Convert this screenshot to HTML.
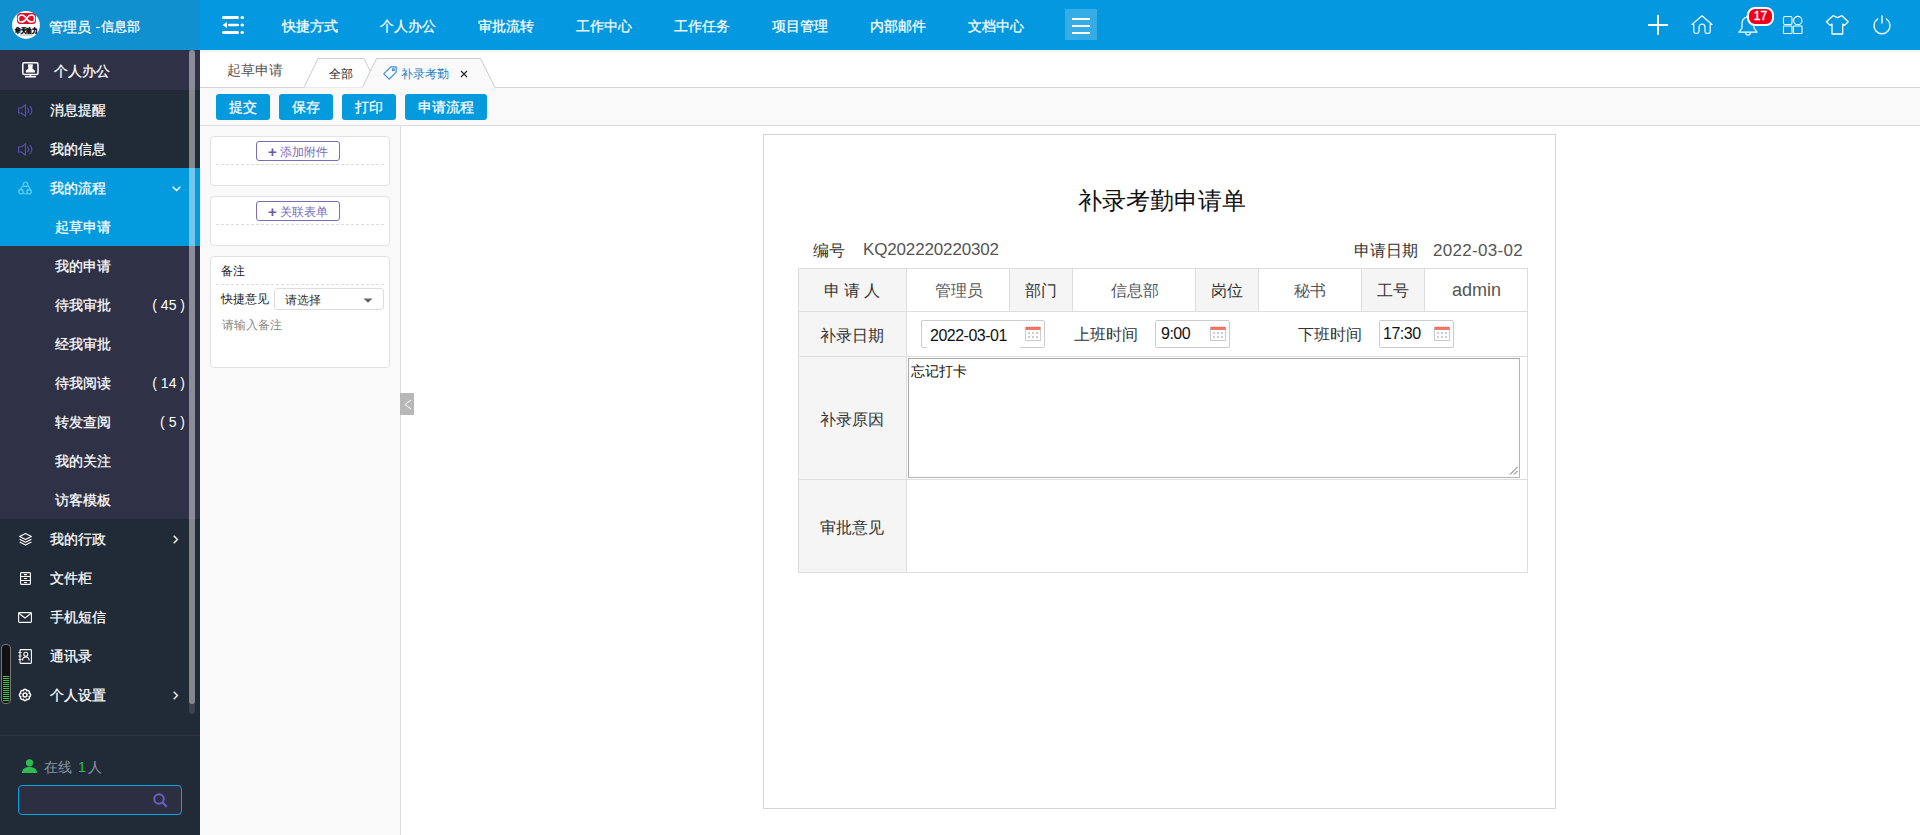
<!DOCTYPE html>
<html><head><meta charset="utf-8">
<style>
*{margin:0;padding:0;box-sizing:border-box}
html,body{width:1920px;height:835px;overflow:hidden;background:#fff;font-family:"Liberation Sans",sans-serif;font-size:14px;color:#333}
.a{position:absolute}
svg{position:absolute;overflow:visible}
#hdr{position:absolute;left:0;top:0;width:1920px;height:50px;background:#0398df;box-shadow:0 1px 3px rgba(0,0,0,.08)}
#logo{position:absolute;left:0;top:0;width:200px;height:50px;background:#1190cf}
.nav{position:absolute;top:1px;height:50px;line-height:50px;color:#fff;font-size:14px;white-space:nowrap}
#side{position:absolute;left:0;top:50px;width:200px;height:785px;background:#212a37}
.it{position:absolute;left:0;width:200px;height:39px;color:#fff;font-size:14px;line-height:39px;white-space:nowrap}
.it .t{position:absolute;left:50px;top:1px}
.sub{background:#2f3146}
.sub .t{left:55px}
.cnt{position:absolute;right:15px;top:1px}
#tabs{position:absolute;left:200px;top:50px;width:1720px;height:38px;background:#fff}
#tool{position:absolute;left:200px;top:88px;width:1720px;height:38px;background:#f9f9f9;border-bottom:1px solid #ddd}
.btn{position:absolute;top:6px;height:26px;background:#049ade;color:#fff;border-radius:3px;text-align:center;line-height:26px;font-size:14px}
#lp{position:absolute;left:200px;top:126px;width:201px;height:709px;background:#f9f9f9;border-right:1px solid #ddd}
.box{position:absolute;left:10px;width:180px;background:#fff;border:1px solid #e3e3e3;border-radius:4px}
.pbtn{position:absolute;left:45px;top:4px;width:84px;height:20px;border:1px solid #7a6cb8;border-radius:3px;color:#7a6cb8;font-size:12px;line-height:18px;text-align:center}
.dash{position:absolute;left:5px;right:5px;border-top:1px dashed #ddd}
#form{position:absolute;left:763px;top:134px;width:793px;height:675px;border:1px solid #d5d5d5;background:#fff}
.c{position:absolute;text-align:center;font-size:16px;color:#555;white-space:nowrap}
.lb{background:#f5f5f5;color:#333}
.hl{position:absolute;height:1px;background:#ddd}
.vl{position:absolute;width:1px;background:#ddd}
.inp{position:absolute;top:320px;height:28px;border:1px solid #ccc;border-radius:2px;background:#fff;font-size:16px;letter-spacing:-0.5px;color:#111;line-height:25px;white-space:nowrap}
.nav,.it,.btn{-webkit-text-stroke:0.25px #fff}
.it .cnt{-webkit-text-stroke:0}
</style></head><body>
<!-- HEADER -->
<div id="hdr"></div>
<div id="logo"></div>
<svg style="left:12px;top:11px" width="28" height="28" viewBox="0 0 28 28">
  <circle cx="14" cy="14" r="13.9" fill="#fff"/>
  <rect x="5" y="2" width="19" height="11" rx="3.5" fill="#e0102a"/>
  <path d="M14.5 7.5c-1.6-2.6-3.2-3.6-5-3.6-1.9 0-3.1 1.6-3.1 3.6s1.2 3.6 3.1 3.6c1.8 0 3.4-1 5-3.6s3.2-3.6 5-3.6c1.9 0 3.1 1.6 3.1 3.6s-1.2 3.6-3.1 3.6c-1.8 0-3.4-1-5-3.6z" fill="none" stroke="#fff" stroke-width="1.5"/>
  <text x="14" y="22" font-size="6.8" font-weight="bold" fill="#111" stroke="#111" stroke-width="0.45" textLength="22" lengthAdjust="spacingAndGlyphs" text-anchor="middle" font-family="Liberation Sans">华天动力</text>
  <rect x="7.5" y="23" width="13" height="2" fill="#aaa" opacity=".5"/>
</svg>
<div class="nav" style="left:49px;top:2px">管理员</div><div class="a" style="left:96px;top:27px;width:4px;height:1px;background:#fff"></div><div class="nav" style="left:101px;top:2px;font-size:12.5px;line-height:50px">信息部</div>
<svg style="left:222px;top:16px" width="22" height="18" viewBox="0 0 22 18">
  <rect x="0" y="0" width="17" height="3" rx="1.5" fill="#fff"/>
  <rect x="18.5" y="0" width="3.5" height="3" rx="1.5" fill="#fff"/>
  <path d="M0.5 9 L5 6 L5 12 Z" fill="#fff"/>
  <rect x="6" y="7.7" width="11" height="2.6" rx="1.3" fill="#fff"/>
  <rect x="18.5" y="7.5" width="3.5" height="3" rx="1.5" fill="#fff"/>
  <rect x="0" y="15" width="17" height="3" rx="1.5" fill="#fff"/>
  <rect x="18.5" y="15" width="3.5" height="3" rx="1.5" fill="#fff"/>
</svg>
<div class="nav" style="left:282px">快捷方式</div>
<div class="nav" style="left:380px">个人办公</div>
<div class="nav" style="left:478px">审批流转</div>
<div class="nav" style="left:576px">工作中心</div>
<div class="nav" style="left:674px">工作任务</div>
<div class="nav" style="left:772px">项目管理</div>
<div class="nav" style="left:870px">内部邮件</div>
<div class="nav" style="left:968px">文档中心</div>
<div class="a" style="left:1065px;top:9px;width:32px;height:31px;background:rgba(255,255,255,.2)"></div>
<div class="a" style="left:1072px;top:18px;width:18px;height:2px;background:#fff"></div>
<div class="a" style="left:1072px;top:25px;width:18px;height:2px;background:#fff"></div>
<div class="a" style="left:1072px;top:32px;width:18px;height:2px;background:#fff"></div>
<!-- right icons -->
<svg style="left:1648px;top:15px" width="20" height="20" viewBox="0 0 20 20"><path d="M10 0V20M0 10H20" stroke="#fff" stroke-width="2"/></svg>
<svg style="left:1691px;top:15px" width="22" height="19" viewBox="0 0 22 19" fill="none" stroke="#fff" stroke-width="1.2" stroke-linejoin="round">
  <path d="M1 9.5L11 0.7 21 9.5h-1.8V16.5a1.8 1.8 0 0 1-1.8 1.8h-1.6a1.8 1.8 0 0 1-1.8-1.8V12.2a3 3 0 0 0-6 0V16.5a1.8 1.8 0 0 1-1.8 1.8H4.6a1.8 1.8 0 0 1-1.8-1.8V9.5z"/>
</svg>
<svg style="left:1738px;top:14px" width="20" height="22" viewBox="0 0 20 22" fill="none" stroke="#fff" stroke-width="1.2" stroke-linejoin="round">
  <path d="M10 1.5a1.2 1.2 0 0 1 1.2 1.2v.5a6.5 6.5 0 0 1 4.8 6.3v4.5l3 4.2H1l3-4.2V9.5a6.5 6.5 0 0 1 4.8-6.3v-.5A1.2 1.2 0 0 1 10 1.5z"/>
  <path d="M7.5 18.5a2.5 2.5 0 0 0 5 0"/>
</svg>
<div class="a" style="left:1747px;top:7px;width:27px;height:19px;border:2px solid #fff;border-radius:8px;background:#f0001c;color:#fff;font-size:12px;line-height:15px;text-align:center;-webkit-text-stroke:0.35px #fff">17</div>
<svg style="left:1783px;top:16px" width="20" height="18" viewBox="0 0 20 18" fill="none" stroke="#fff" stroke-width="1.1">
  <rect x="0.5" y="0.5" width="8.5" height="8" rx="1.5"/>
  <circle cx="14.8" cy="4.6" r="4.2"/>
  <rect x="0.5" y="10" width="8.5" height="7.5" rx="0.5"/>
  <rect x="10.5" y="10" width="8.5" height="7.5" rx="0.5"/>
</svg>
<svg style="left:1826px;top:15px" width="23" height="20" viewBox="0 0 23 20" fill="none" stroke="#fff" stroke-width="1.3" stroke-linejoin="round">
  <path d="M7 0.7l4.5 2 4.5-2 6.2 6.1-3.6 3.6-1.9-1.3V19H6V9.1L4.1 10.4 0.5 6.8z"/>
</svg>
<svg style="left:1872px;top:15px" width="20" height="20" viewBox="0 0 20 20" fill="none" stroke="#fff" stroke-width="1.4" stroke-linecap="round">
  <path d="M5.6 4a8 8 0 1 0 8.8 0"/>
  <path d="M10 1v7"/>
</svg>

<!-- SIDEBAR -->
<div id="side"></div>
<div class="it sub" style="top:50px;height:40px;line-height:40px"><span class="t" style="left:54px">个人办公</span></div>
<svg style="left:22px;top:62px" width="17" height="16" viewBox="0 0 17 16" fill="none" stroke="#fff" stroke-width="1.5">
  <rect x="0.8" y="0.8" width="15.2" height="11.6" rx="1.5"/>
  <path d="M6.3 2.3h4.2c.3 0 .4.3.4.5l-.5 3.6 2.5 2.2v2H3.9v-2l2.5-2.2-.5-3.6c0-.2.1-.5.4-.5z" fill="#fff" stroke="none"/>
  <path d="M8.4 12.5v1.8M3 14.8h11"/>
</svg>
<div class="it" style="top:90px"><span class="t">消息提醒</span></div>
<div class="it" style="top:129px"><span class="t">我的信息</span></div>
<svg style="left:18px;top:104px" width="15" height="13" viewBox="0 0 15 13" fill="none" stroke="#5b50b4" stroke-width="1.1">
  <path d="M0.6 4h2.8L7.5 0.8v11.4L3.4 9H0.6z"/>
  <path d="M9.5 3.8a3.5 3.5 0 0 1 0 5.4M11.7 1.8a6.2 6.2 0 0 1 0 9.4"/>
</svg>
<svg style="left:18px;top:143px" width="15" height="13" viewBox="0 0 15 13" fill="none" stroke="#5b50b4" stroke-width="1.1">
  <path d="M0.6 4h2.8L7.5 0.8v11.4L3.4 9H0.6z"/>
  <path d="M9.5 3.8a3.5 3.5 0 0 1 0 5.4M11.7 1.8a6.2 6.2 0 0 1 0 9.4"/>
</svg>
<div class="it" style="top:168px;height:78px;background:#049ade"></div>
<div class="it" style="top:168px"><span class="t">我的流程</span></div>
<svg style="left:18px;top:181px" width="14" height="14" viewBox="0 0 14 14" fill="none" stroke="#5ccbf0" stroke-width="1.3">
  <circle cx="7.5" cy="3.3" r="2.2"/><circle cx="3" cy="10.7" r="2.2"/><circle cx="11.2" cy="10.7" r="2.2"/>
  <path d="M5.5 4.6C3.8 5.5 3 7 2.9 8.5M9.5 4.6c1.7.9 2.5 2.4 2.6 3.9M5 12.3c1.4.8 3.1.8 4.3 0"/>
</svg>
<svg style="left:172px;top:186px" width="9" height="6" viewBox="0 0 9 6"><path d="M0.7 0.7L4.5 4.5 8.3 0.7" fill="none" stroke="#fff" stroke-width="1.4"/></svg>
<div class="it" style="top:207px"><span class="t" style="left:55px">起草申请</span></div>
<div class="it sub" style="top:246px;height:273px"></div>
<div class="it" style="top:246px"><span class="t" style="left:55px">我的申请</span></div>
<div class="it" style="top:285px"><span class="t" style="left:55px">待我审批</span><span class="cnt">( 45 )</span></div>
<div class="it" style="top:324px"><span class="t" style="left:55px">经我审批</span></div>
<div class="it" style="top:363px"><span class="t" style="left:55px">待我阅读</span><span class="cnt">( 14 )</span></div>
<div class="it" style="top:402px"><span class="t" style="left:55px">转发查阅</span><span class="cnt">( 5 )</span></div>
<div class="it" style="top:441px"><span class="t" style="left:55px">我的关注</span></div>
<div class="it" style="top:480px"><span class="t" style="left:55px">访客模板</span></div>
<div class="it" style="top:519px"><span class="t">我的行政</span></div>
<div class="it" style="top:558px"><span class="t">文件柜</span></div>
<div class="it" style="top:597px"><span class="t">手机短信</span></div>
<div class="it" style="top:636px"><span class="t">通讯录</span></div>
<div class="it" style="top:675px"><span class="t">个人设置</span></div>
<svg style="left:19px;top:533px" width="13" height="13" viewBox="0 0 13 13" fill="none" stroke="#fff" stroke-width="1.1" stroke-linejoin="round">
  <path d="M6.5 0.6L12.4 3.6 6.5 6.6 0.6 3.6z"/><path d="M0.6 6.3l5.9 3 5.9-3M0.6 9l5.9 3 5.9-3"/>
</svg>
<svg style="left:20px;top:572px" width="11" height="13" viewBox="0 0 11 13" fill="none" stroke="#fff" stroke-width="1.1">
  <rect x="0.6" y="0.6" width="9.8" height="11.8" rx="0.8"/><path d="M0.6 4.5h9.8M0.6 8.5h9.8M4 2.6h3M4 6.5h3M4 10.5h3"/>
</svg>
<svg style="left:18px;top:612px" width="14" height="11" viewBox="0 0 14 11" fill="none" stroke="#fff" stroke-width="1.1">
  <rect x="0.6" y="0.6" width="12.8" height="9.8" rx="0.8"/><path d="M0.8 1.2L7 6 13.2 1.2"/>
</svg>
<svg style="left:18px;top:649px" width="14" height="15" viewBox="0 0 14 15" fill="none" stroke="#fff" stroke-width="1.1">
  <rect x="2" y="0.6" width="11.4" height="13.8" rx="0.8"/><circle cx="7.8" cy="5.3" r="2"/><path d="M4.5 11.5c0-2.2 1.5-3.5 3.3-3.5s3.3 1.3 3.3 3.5M0.5 3.5h3M0.5 7h3M0.5 10.5h3"/>
</svg>
<svg style="left:18px;top:688px" width="14" height="14" viewBox="0 0 14 14" fill="none" stroke="#fff" stroke-width="1.5"><path d="M5.20 2.66 A1.9 1.9 0 0 1 8.80 2.66 A1.9 1.9 0 0 1 11.34 5.20 A1.9 1.9 0 0 1 11.34 8.80 A1.9 1.9 0 0 1 8.80 11.34 A1.9 1.9 0 0 1 5.20 11.34 A1.9 1.9 0 0 1 2.66 8.80 A1.9 1.9 0 0 1 2.66 5.20 A1.9 1.9 0 0 1 5.20 2.66 Z"/><circle cx="7" cy="7" r="2"/></svg>
<svg style="left:173px;top:535px" width="6" height="9" viewBox="0 0 6 9"><path d="M0.7 0.7L4.5 4.5 0.7 8.3" fill="none" stroke="#fff" stroke-width="1.4"/></svg>
<svg style="left:173px;top:691px" width="6" height="9" viewBox="0 0 6 9"><path d="M0.7 0.7L4.5 4.5 0.7 8.3" fill="none" stroke="#fff" stroke-width="1.4"/></svg>
<!-- scrollbar -->
<div class="a" style="left:189px;top:50px;width:6px;height:664px;background:rgba(255,255,255,.12);border-radius:3px"></div>
<div class="a" style="left:189px;top:50px;width:6px;height:654px;background:rgba(255,255,255,.37);border-radius:3px"></div>
<!-- volume widget -->
<div class="a" style="left:1px;top:644px;width:10px;height:60px;border:1px solid #777;border-radius:4px;background:#111"></div>
<div class="a" style="left:3px;top:676px;width:6px;height:25px;background:repeating-linear-gradient(#3ec24a 0 1px,#111 1px 2px)"></div>
<!-- bottom -->
<div class="a" style="left:0;top:735px;width:200px;height:1px;background:#33344a"></div>
<svg style="left:22px;top:759px" width="15" height="14" viewBox="0 0 15 14"><circle cx="7.5" cy="3.8" r="3.6" fill="#2dbe4f"/><path d="M0 14c0-4 3-6 7.5-6s7.5 2 7.5 6z" fill="#2dbe4f"/></svg>
<div class="a" style="left:44px;top:757px;font-size:14px;line-height:20px;color:#8895a2;white-space:nowrap">在线</div><div class="a" style="left:78px;top:757px;font-size:14px;line-height:20px;color:#2dbe4f">1</div><div class="a" style="left:88px;top:757px;font-size:14px;line-height:20px;color:#8895a2">人</div>
<div class="a" style="left:18px;top:785px;width:164px;height:30px;border:1px solid #0aa0e4;border-radius:4px;background:#2c2f42"></div>
<svg style="left:153px;top:793px" width="15" height="15" viewBox="0 0 15 15" fill="none" stroke="#6a5fc4" stroke-width="2"><circle cx="6" cy="6" r="4.8"/><path d="M9.5 9.5L13.8 13.8"/></svg>

<!-- TABS -->
<div id="tabs"></div>
<div class="a" style="left:200px;top:50px;width:1720px;height:4px;background:linear-gradient(rgba(0,0,0,.05),rgba(0,0,0,0))"></div>
<div class="a" style="left:200px;top:87px;width:163px;height:1px;background:#d5d5d5"></div><div class="a" style="left:494px;top:87px;width:1426px;height:1px;background:#d5d5d5"></div>
<div class="a" style="left:227px;top:60px;font-size:14px;line-height:20px;color:#555">起草申请</div>
<svg style="left:0;top:0" width="1920" height="90">
  <path d="M304 87.5L318 58.5H364L378 87.5" fill="#fff" stroke="#ccc" stroke-width="1"/>
  <path d="M362 88.5L376.5 58.5H480.5L495.5 88.5z" fill="#f9f9f9" stroke="none"/><path d="M362.5 87.5L376.5 58.5H480.5L495 87.5" fill="none" stroke="#ccc" stroke-width="1"/>
</svg>
<div class="a" style="left:329px;top:65px;font-size:12px;line-height:18px;color:#222">全部</div>
<svg style="left:383px;top:66px" width="14" height="14" viewBox="0 0 14 14" fill="none" stroke="#3d8ed8" stroke-width="1.2" stroke-linejoin="round"><path d="M7.8 0.8h5.4v5.4L6.2 13.2 0.8 7.8z"/><circle cx="10.3" cy="3.7" r="1"/></svg>
<div class="a" style="left:401px;top:65px;font-size:12px;line-height:18px;color:#1e7fc6">补录考勤</div>
<svg style="left:460px;top:70px" width="8" height="8" viewBox="0 0 8 8"><path d="M1 1L7 7M7 1L1 7" stroke="#222" stroke-width="1.1"/></svg>

<!-- TOOLBAR -->
<div id="tool">
  <div class="btn" style="left:16px;width:54px">提交</div>
  <div class="btn" style="left:79px;width:54px">保存</div>
  <div class="btn" style="left:142px;width:54px">打印</div>
  <div class="btn" style="left:205px;width:82px">申请流程</div>
</div>

<!-- LEFT PANEL -->
<div id="lp">
  <div class="box" style="top:10px;height:50px"><div class="pbtn"><b style="font-size:15px;color:#6a58b0;position:relative;top:1px">+</b> 添加附件</div><div class="dash" style="top:27px"></div></div>
  <div class="box" style="top:70px;height:50px"><div class="pbtn"><b style="font-size:15px;color:#6a58b0;position:relative;top:1px">+</b> 关联表单</div><div class="dash" style="top:27px"></div></div>
  <div class="box" style="top:130px;height:112px">
    <div class="a" style="left:10px;top:6px;font-size:12px;line-height:16px;color:#222">备注</div>
    <div class="dash" style="top:27px"></div>
    <div class="a" style="left:10px;top:34px;font-size:12px;line-height:16px;color:#222">快捷意见</div>
    <div class="a" style="left:63px;top:31px;width:110px;height:22px;border:1px solid #ddd;border-radius:3px;background:#fff"></div>
    <div class="a" style="left:74px;top:35px;font-size:12px;line-height:16px;color:#333">请选择</div>
    <svg style="left:152px;top:41px" width="10" height="5" viewBox="0 0 10 5"><path d="M0.5 0.5H9.5L5 4.8z" fill="#666"/></svg>
    <div class="a" style="left:11px;top:60px;font-size:12px;line-height:16px;color:#888">请输入备注</div>
  </div>
</div>
<div class="a" style="left:400px;top:393px;width:14px;height:22px;background:#b8b8b8"></div>
<svg style="left:404px;top:399px" width="8" height="11" viewBox="0 0 8 11"><path d="M7 1L1 5.5 7 10" fill="none" stroke="#fff" stroke-width="1"/></svg>

<!-- FORM -->
<div id="form"></div>
<div class="a" style="left:1078px;top:186px;font-size:24px;line-height:30px;color:#111;white-space:nowrap">补录考勤申请单</div>
<div class="a" style="left:813px;top:241px;font-size:16px;line-height:20px;color:#333;white-space:nowrap">编号</div>
<div class="a" style="left:863px;top:240px;font-size:17px;letter-spacing:-0.15px;line-height:20px;color:#555;white-space:nowrap">KQ202220220302</div>
<div class="a" style="left:1354px;top:241px;font-size:16px;line-height:20px;color:#333;white-space:nowrap">申请日期</div>
<div class="a" style="left:1433px;top:241px;font-size:17px;letter-spacing:0.3px;line-height:20px;color:#555;white-space:nowrap">2022-03-02</div>

<!-- table backgrounds -->
<div class="a lb" style="left:798px;top:268px;width:108px;height:304px"></div>
<div class="a lb" style="left:1009px;top:268px;width:63px;height:43px"></div>
<div class="a lb" style="left:1195px;top:268px;width:63px;height:43px"></div>
<div class="a lb" style="left:1361px;top:268px;width:63px;height:43px"></div>
<!-- lines -->
<div class="hl" style="left:798px;top:268px;width:730px"></div>
<div class="hl" style="left:798px;top:311px;width:730px"></div>
<div class="hl" style="left:798px;top:356px;width:730px"></div>
<div class="hl" style="left:798px;top:479px;width:730px"></div>
<div class="hl" style="left:798px;top:572px;width:730px"></div>
<div class="vl" style="left:798px;top:268px;height:305px"></div>
<div class="vl" style="left:906px;top:268px;height:305px"></div>
<div class="vl" style="left:1527px;top:268px;height:305px"></div>
<div class="vl" style="left:1009px;top:268px;height:43px"></div>
<div class="vl" style="left:1072px;top:268px;height:43px"></div>
<div class="vl" style="left:1195px;top:268px;height:43px"></div>
<div class="vl" style="left:1258px;top:268px;height:43px"></div>
<div class="vl" style="left:1361px;top:268px;height:43px"></div>
<div class="vl" style="left:1424px;top:268px;height:43px"></div>
<!-- row1 text -->
<div class="c" style="left:798px;top:281px;width:108px;line-height:20px;color:#333;letter-spacing:4px;text-indent:4px">申请人</div>
<div class="c" style="left:907px;top:281px;width:103px;line-height:20px">管理员</div>
<div class="c" style="left:1009px;top:281px;width:63px;line-height:20px;color:#333">部门</div>
<div class="c" style="left:1073px;top:281px;width:123px;line-height:20px">信息部</div>
<div class="c" style="left:1195px;top:281px;width:63px;line-height:20px;color:#333">岗位</div>
<div class="c" style="left:1258px;top:281px;width:103px;line-height:20px">秘书</div>
<div class="c" style="left:1361px;top:281px;width:63px;line-height:20px;color:#333">工号</div>
<div class="c" style="left:1425px;top:280px;width:103px;line-height:20px;font-size:18px">admin</div>
<!-- row2 -->
<div class="c" style="left:798px;top:326px;width:108px;line-height:20px;color:#333">补录日期</div>
<div class="inp" style="left:921px;width:124px;padding-left:8px;padding-top:2px">2022-03-01</div>
<div class="c" style="left:1074px;top:325px;line-height:20px;color:#333">上班时间</div>
<div class="inp" style="left:1155px;width:75px;padding-left:5px">9:00</div>
<div class="c" style="left:1298px;top:325px;line-height:20px;color:#333">下班时间</div>
<div class="inp" style="left:1379px;width:75px;padding-left:3px">17:30</div>
<svg style="left:1025px;top:325px" width="16" height="16" viewBox="0 0 16 16" id="cal1"><g>
  <rect x="0.5" y="2.5" width="15" height="13" fill="#fff" stroke="#ccc"/><rect x="0.5" y="2" width="15" height="3" fill="#f07b6e"/>
  <path d="M2 1.5v2M4.5 1.5v2M7 1.5v2M9.5 1.5v2M12 1.5v2M14 1.5v2" stroke="#e8604f" stroke-width="1"/>
  <path d="M3 7h2v2H3zM7 7h2v2H7zM11 7h2v2h-2zM3 11h2v2H3zM7 11h2v2H7zM11 11h2v2h-2z" fill="#ccc"/></g>
</svg>
<svg style="left:1210px;top:325px" width="16" height="16" viewBox="0 0 16 16">
  <rect x="0.5" y="2.5" width="15" height="13" fill="#fff" stroke="#ccc"/><rect x="0.5" y="2" width="15" height="3" fill="#f07b6e"/>
  <path d="M2 1.5v2M4.5 1.5v2M7 1.5v2M9.5 1.5v2M12 1.5v2M14 1.5v2" stroke="#e8604f" stroke-width="1"/>
  <path d="M3 7h2v2H3zM7 7h2v2H7zM11 7h2v2h-2zM3 11h2v2H3zM7 11h2v2H7zM11 11h2v2h-2z" fill="#ccc"/>
</svg>
<svg style="left:1434px;top:325px" width="16" height="16" viewBox="0 0 16 16">
  <rect x="0.5" y="2.5" width="15" height="13" fill="#fff" stroke="#ccc"/><rect x="0.5" y="2" width="15" height="3" fill="#f07b6e"/>
  <path d="M2 1.5v2M4.5 1.5v2M7 1.5v2M9.5 1.5v2M12 1.5v2M14 1.5v2" stroke="#e8604f" stroke-width="1"/>
  <path d="M3 7h2v2H3zM7 7h2v2H7zM11 7h2v2h-2zM3 11h2v2H3zM7 11h2v2h-2zM11 11h2v2h-2z" fill="#ccc"/>
</svg>
<div class="a" style="left:927px;top:347px;width:93px;height:1px;background:#fff"></div>
<!-- row3 -->
<div class="c" style="left:798px;top:410px;width:108px;line-height:20px;color:#333">补录原因</div>
<div class="a" style="left:908px;top:358px;width:612px;height:120px;border:1px solid #b5b5b5;border-top-color:#a8a8a8;border-left-color:#a8a8a8;background:#fff"></div>
<div class="a" style="left:911px;top:362px;font-size:14px;line-height:18px;color:#111">忘记打卡</div>
<svg style="left:1509px;top:466px" width="9" height="9" viewBox="0 0 9 9"><path d="M8.5 1L1 8.5M8.5 5L5 8.5" stroke="#666" stroke-width="1"/></svg>
<!-- row4 -->
<div class="c" style="left:798px;top:518px;width:108px;line-height:20px;color:#333">审批意见</div>
</body></html>
